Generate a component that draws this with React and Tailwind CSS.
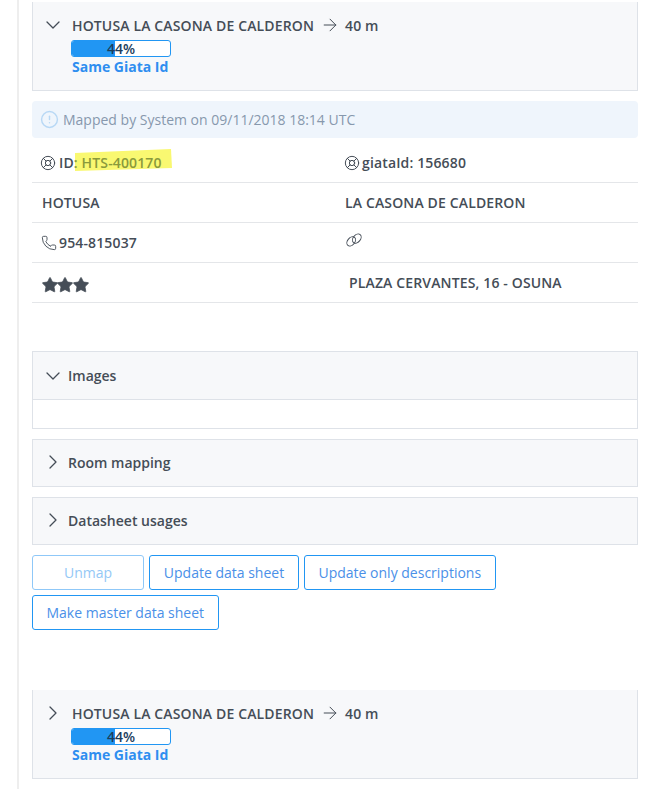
import React from "react";
import { ChevronDown, ChevronRight, ArrowRight, LifeBuoy, Phone, Star, CircleAlert } from "lucide-react";

const Chevron = ({ open }) =>
  open ? (
    <ChevronDown size={24} strokeWidth={1.3} className="text-[#454d57] -ml-[6px] shrink-0" />
  ) : (
    <ChevronRight size={24} strokeWidth={1.3} className="text-[#454d57] -ml-[6px] shrink-0" />
  );

const MatchHeader = ({ open }) => (
  <div className="h-[89px] border border-t-0 border-[#dee2e8] bg-[#f7f8fa] pl-[14px] pt-[13px] flex">
    <div className="w-[25px] h-[20px] flex items-center">
      <Chevron open={open} />
    </div>
    <div>
      <div className="flex items-center h-[20px] text-[14px] font-semibold tracking-[0.14px] text-[#454d57]">
        <span>HOTUSA LA CASONA DE CALDERON</span>
        <ArrowRight size={20} strokeWidth={1.2} className="ml-[6px] mr-[5px]" />
        <span>40 m</span>
      </div>
      <div className="relative -ml-px w-[100px] h-[17px] mt-[5px] border border-[#2196f3] rounded-[3px] overflow-hidden bg-white">
        <div className="h-full w-[44%] bg-[#2196f3]"></div>
        <div className="absolute inset-0 flex items-center justify-center text-[14px] leading-none font-semibold text-[#1d3e5c]">44%</div>
      </div>
      <div className="text-[14px] leading-[19px] font-bold text-[#2f8ef0]">Same Giata Id</div>
    </div>
  </div>
);

const Row = ({ children, right, rightClass = "" }) => (
  <div className="h-[40px] border-b border-[#e4e6e9] flex items-center text-[14px] font-semibold tracking-[0.14px] text-[#454d57]">
    <div className="w-[313px] pl-[10px] flex items-center gap-[3px]">{children}</div>
    <div className={`flex items-center gap-[3px] ${rightClass}`}>{right}</div>
  </div>
);

const Section = ({ title, open }) => (
  <div className={`${open ? "h-[49px]" : "h-[48px] pb-[2px]"} border border-[#dee2e8] bg-[#f7f8fa] pl-[14px] flex items-center`}>
    <div className="w-[21px] flex items-center">
      <Chevron open={open} />
    </div>
    <span className="text-[14px] font-semibold text-[#454d57]">{title}</span>
  </div>
);

const Btn = ({ children, disabled, className = "" }) => (
  <button
    className={`h-[35px] px-[13.5px] border rounded-[3px] text-[14px] bg-white ${
      disabled ? "w-[112px] border-[#8fc8f8] text-[#94c8f6]" : "border-[#2196f3] text-[#4a90e8]"
    } ${className}`}
  >
    {children}
  </button>
);

const Rings = () => (
  <svg width="18" height="14" viewBox="0 0 18 14" fill="none" stroke="currentColor" strokeWidth="1" className="-mt-[6px]">
    <ellipse cx="6.2" cy="8.4" rx="5.2" ry="3.6" transform="rotate(-50 6.2 8.4)" />
    <ellipse cx="11.8" cy="5.6" rx="5.2" ry="3.6" transform="rotate(-50 11.8 5.6)" />
  </svg>
);

export default function App() {
  return (
    <div className="h-[789px] w-[652px] overflow-hidden bg-white font-['Open_Sans','Noto_Sans',sans-serif]">
      <div className="ml-[17px] h-full w-[621px] border-l-2 border-[#eeeeee] pl-[13px] pt-[2px]">
        <MatchHeader open />

        <div className="mt-[10px] h-[37px] rounded-[4px] bg-[#eff5fc] pl-[8px] flex items-center gap-[4px] text-[14px] text-[#8798ad]">
          <CircleAlert size={19} strokeWidth={1.8} className="text-[#b8d8f5]" />
          <span>Mapped by System on 09/11/2018 18:14 UTC</span>
        </div>

        <div className="h-[45px] pt-[5px] border-b border-[#e4e6e9] flex items-center text-[14px] font-semibold tracking-[0.14px] text-[#454d57]">
          <div className="w-[313px] pl-[8px] flex items-center gap-[3px]">
            <LifeBuoy size={16} strokeWidth={1.5} />
            <span className="relative">
              {/* marker highlight over the id */}
              <svg width="100" height="24" viewBox="0 0 100 24" className="absolute left-[15px] -top-[3px]">
                <polygon points="1,4 97,0 98,19 1,22" fill="#f9f871" />
              </svg>
              <span className="relative">ID</span>
              <span className="relative text-[#8a9a3c]">: HTS-400170</span>
            </span>
          </div>
          <div className="flex items-center gap-[2px] -ml-[1px]">
            <LifeBuoy size={16} strokeWidth={1.5} />
            <span>giataId: 156680</span>
          </div>
        </div>
        <Row right={<span>LA CASONA DE CALDERON</span>}>
          <span>HOTUSA</span>
        </Row>
        <Row right={<Rings />}>
          <div className="-ml-[1px] flex items-center gap-[2px]">
            <Phone size={16} strokeWidth={1.4} />
            <span>954-815037</span>
          </div>
        </Row>
        <Row right={<span>PLAZA CERVANTES, 16 - OSUNA</span>} rightClass="pl-[4px] -mt-[1px]">
          <div className="flex items-center -space-x-[2.5px] -ml-[1.5px] mt-[4px]">
            <Star size={18} fill="currentColor" strokeWidth={1} />
            <Star size={18} fill="currentColor" strokeWidth={1} />
            <Star size={18} fill="currentColor" strokeWidth={1} />
          </div>
        </Row>

        <div className="mt-[48px]">
          <Section title="Images" open />
          <div className="h-[29px] border border-t-0 border-[#dee2e8]"></div>
        </div>
        <div className="mt-[10px]">
          <Section title="Room mapping" />
        </div>
        <div className="mt-[10px]">
          <Section title="Datasheet usages" />
        </div>

        <div className="mt-[10px] flex flex-wrap gap-[5px] w-[520px]">
          <Btn disabled>Unmap</Btn>
          <Btn className="w-[150px]">Update data sheet</Btn>
          <Btn>Update only descriptions</Btn>
          <Btn>Make master data sheet</Btn>
        </div>

        <div className="mt-[60px]">
          <MatchHeader />
        </div>
      </div>
    </div>
  );
}
